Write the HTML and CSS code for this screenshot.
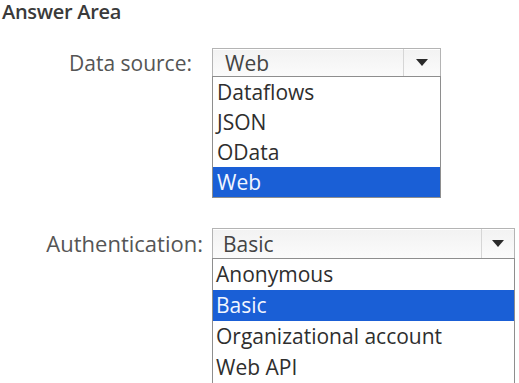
FILE: index.html
```html
<!DOCTYPE html>
<html lang="en">
<head>
  <meta charset="UTF-8">
  <title>Answer Area</title>
  <link rel="stylesheet" href="styles.css">
</head>
<body>
  <h1 class="title">Answer Area</h1>

  <div class="field field-source">
    <span class="field-label">Data source:</span>
    <div class="dropdown">
      <div class="dropdown-box">
        <span class="dropdown-value">Web</span>
        <span class="dropdown-arrow"></span>
      </div>
      <ul class="dropdown-list">
        <li>Dataflows</li>
        <li>JSON</li>
        <li>OData</li>
        <li class="selected">Web</li>
      </ul>
    </div>
  </div>

  <div class="field field-auth">
    <span class="field-label">Authentication:</span>
    <div class="dropdown">
      <div class="dropdown-box">
        <span class="dropdown-value">Basic</span>
        <span class="dropdown-arrow"></span>
      </div>
      <ul class="dropdown-list">
        <li>Anonymous</li>
        <li class="selected">Basic</li>
        <li>Organizational account</li>
        <li>Web API</li>
      </ul>
    </div>
  </div>
</body>
</html>
```

FILE: styles.css
```css
body {
  margin: 0;
  font-family: 'Open Sans', 'Noto Sans', sans-serif;
  background-color: #fff;
  color: #2e2e2e;
  overflow: hidden;
}
.title {
  margin: 0;
  padding: 0 0 0 2px;
  font-size: 20px;
  font-weight: 600;
  line-height: 24px;
  letter-spacing: -0.3px;
  color: #3a3a3a;
}
.field {
  display: grid;
  grid-template-columns: 212px auto;
  align-items: start;
}
.field-source {
  margin-top: 24px;
}
.field-auth {
  margin-top: 30px;
}
.field-label {
  justify-self: end;
  font-size: 21px;
  line-height: 28px;
  color: #555;
  padding-top: 1px;
}
.field-source .field-label {
  padding-right: 20px;
}
.field-auth .field-label {
  padding-right: 9px;
  font-size: 22px;
}
.dropdown {
  font-size: 21px;
}
.field-source .dropdown {
  width: 229px;
}
.field-auth .dropdown {
  width: 303px;
}
.dropdown-box {
  display: flex;
  height: 27px;
  border: 1px solid #b4b4b4;
  border-bottom: none;
  background: linear-gradient(#f2f2f2, #fbfbfb);
  box-shadow: inset 0 1px 0 #fff;
}
.field-auth .dropdown-box {
  height: 29px;
}
.dropdown-value {
  flex: 1;
  padding-left: 12px;
  line-height: 28px;
  color: #444;
}
.field-auth .dropdown-value {
  padding-left: 10px;
  line-height: 31px;
}
.dropdown-arrow {
  width: 36px;
  border-left: 1px solid #d6d6d6;
  display: flex;
  align-items: center;
  justify-content: center;
}
.field-auth .dropdown-arrow {
  width: 32px;
}
.dropdown-arrow::after {
  content: '';
  border-left: 6px solid transparent;
  border-right: 6px solid transparent;
  border-top: 7px solid #2a2a2a;
}
.dropdown-list {
  list-style: none;
  margin: 0;
  padding: 0;
  border: 1px solid #8e8e8e;
  background-color: #fff;
}
.dropdown-list li {
  height: 30px;
  line-height: 30px;
  padding-left: 4px;
}
.field-auth .dropdown-list li {
  height: 31px;
  line-height: 31px;
  padding-left: 3px;
}
.dropdown-list li.selected {
  background-color: #1a5fd6;
  color: #f2f6ff;
}
```
